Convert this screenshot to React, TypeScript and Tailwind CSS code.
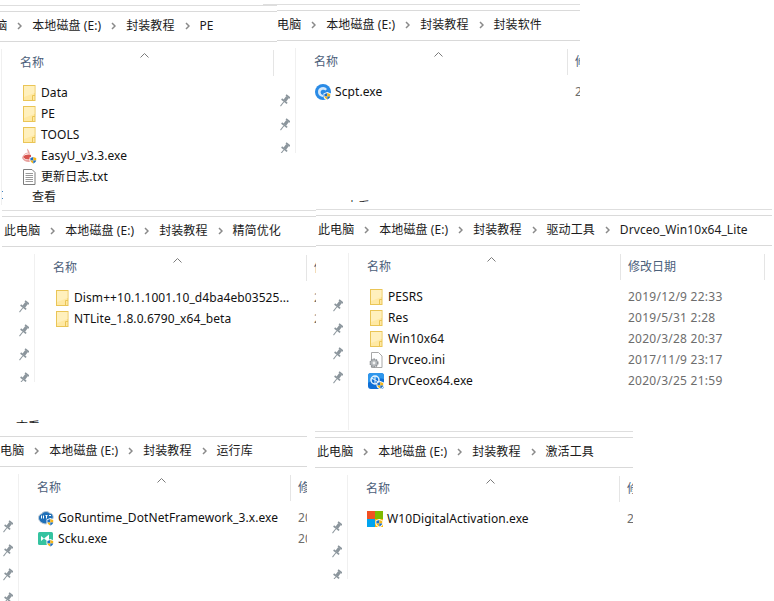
import { ReactNode } from "react";

const Shield = () => (
  <g>
    <path d="M8.5 9.5 L12.3 8 L16 9.5 V12.5 C16 14.4 14.4 15.6 12.3 16.2 C10.2 15.6 8.5 14.4 8.5 12.5 Z" fill="#fff" />
    <path d="M12.3 8.9 V12.5 H9.4 V10.1 Z" fill="#1d6fc4" />
    <path d="M12.3 8.9 L15.2 10.1 V12.5 H12.3 Z" fill="#f4b61a" />
    <path d="M9.4 12.5 H12.3 V15.4 C11 15 9.6 14 9.4 12.5 Z" fill="#f4b61a" />
    <path d="M15.2 12.5 H12.3 V15.4 C13.6 15 15 14 15.2 12.5 Z" fill="#1d6fc4" />
  </g>
);

const FolderIcon = () => (
  <svg width="16" height="16" viewBox="0 0 16 16" className="shrink-0">
    <rect x="2.5" y="0.5" width="11.5" height="15" fill="#ffe9a4" stroke="#eac556" />
    <path d="M3 1 H13.5 V8 L3 12 Z" fill="#fff0bd" />
    <path d="M11.5 15.5 V10.5 H14" fill="none" stroke="#eac556" />
  </svg>
);

const TextIcon = () => (
  <svg width="16" height="16" viewBox="0 0 16 16" className="shrink-0">
    <path d="M2.5 0.5 H11 L14 3.5 V15.5 H2.5 Z" fill="#fff" stroke="#7d7d7d" />
    <path d="M4.5 4.5 H12 M4.5 6.5 H12 M4.5 8.5 H12 M4.5 10.5 H12 M4.5 12.5 H12" stroke="#9a9a9a" />
  </svg>
);

const IniIcon = () => (
  <svg width="16" height="16" viewBox="0 0 16 16" className="shrink-0">
    <path d="M3.5 0.5 H10.5 L14 4 V15.5 H3.5 Z" fill="#fff" stroke="#a8a8a8" />
    <circle cx="6" cy="11" r="3.8" fill="#b4b8bb" stroke="#8d9195" strokeDasharray="1.6 0.8" strokeWidth="1.5" />
    <circle cx="6" cy="11" r="1.4" fill="#f2f2f2" />
  </svg>
);

const EasyIcon = () => (
  <svg width="16" height="16" viewBox="0 0 16 16" className="shrink-0">
    <path d="M6 0.5 C8 2 8.5 4 9 6 C6 4.5 3.5 6 2 9 C3 11.5 6 12.5 9 11.5 L9 14 C5.5 14.5 2.5 13 1 10 C2 6.5 4 5 7 4.5 C6.5 3 6 2 6 0.5 Z" fill="#e9a3a0" />
    <path d="M2 9 C4 6.5 7 6 10 7 L10 11 C7 12 4 11.5 2 9 Z" fill="#d8544f" />
    <Shield />
  </svg>
);

const ScptIcon = () => (
  <svg width="16" height="16" viewBox="0 0 16 16" className="shrink-0">
    <circle cx="8" cy="8" r="8" fill="#2a8be6" />
    <path d="M3 8 A5 5 0 0 1 12 5 L10.5 6.5 A3 3 0 0 0 5.5 8 A3 3 0 0 0 8 11 L8 13 A5 5 0 0 1 3 8 Z" fill="#d5e8fa" />
    <Shield />
  </svg>
);

const DrvIcon = () => (
  <svg width="16" height="16" viewBox="0 0 16 16" className="shrink-0">
    <rect width="16" height="16" rx="3" fill="#0f6fd6" />
    <path d="M0 3 A3 3 0 0 1 3 0 H13 A3 3 0 0 1 16 3 V6 C10 4 5 6 0 10 Z" fill="#2f97ec" />
    <circle cx="7" cy="7" r="4" fill="none" stroke="#e6f3fd" strokeWidth="1.5" />
    <path d="M7 3 V11 M3.5 5 L10.5 9" stroke="#e6f3fd" />
    <Shield />
  </svg>
);

const NetIcon = () => (
  <svg width="16" height="16" viewBox="0 0 16 16" className="shrink-0">
    <path d="M0.5 8 C0.5 5 2.5 4 3.5 4 C5 1 10 1 11.5 3 C14 3 15.7 5.5 15.2 8 C14 11 11 13 8 14 C4 14 0.5 11 0.5 8 Z" fill="#1e6fb8" stroke="#c4cfd8" />
    <path d="M3.5 5.5 V8.5 M5.5 5.5 V8.5 M7.5 5.5 H9.5 M8.5 5.5 V8.5 M11 5.5 H13" stroke="#fff" />
    <Shield />
  </svg>
);

const SckuIcon = () => (
  <svg width="16" height="16" viewBox="0 0 16 16" className="shrink-0">
    <rect y="1" width="15" height="13" rx="1.5" fill="#35c3a0" />
    <path d="M3 5 L6 7.5 L3 10 Z M6 7.5 L11 3.5 V11.5 Z" fill="#fff" />
    <Shield />
  </svg>
);

const WinIcon = () => (
  <svg width="16" height="16" viewBox="0 0 16 16" className="shrink-0">
    <rect width="8" height="8" fill="#f25022" />
    <rect x="8" width="8" height="8" fill="#7fba00" />
    <rect y="8" width="8" height="8" fill="#00a4ef" />
    <rect x="8" y="8" width="8" height="8" fill="#ffb900" />
    <Shield />
  </svg>
);

const PinIcon = () => (
  <svg width="11" height="14" viewBox="0 0 11 14" className="shrink-0">
    <g transform="rotate(38 5.5 7)" fill="#8b959c">
      <rect x="3" y="0.5" width="5" height="1.6" />
      <rect x="3.8" y="2" width="3.4" height="4.6" />
      <rect x="2" y="6.4" width="7" height="1.6" />
      <rect x="5" y="8" width="1" height="5.5" />
    </g>
  </svg>
);

const CrumbArrow = () => (
  <span className="flex w-[25px] shrink-0 justify-center">
    <svg width="5" height="8" viewBox="0 0 5 8">
      <path d="M1 1 L4 4 L1 7" fill="none" stroke="#8a8a8a" strokeWidth="1.5" />
    </svg>
  </span>
);

type Row = { icon: ReactNode; name: string; date?: string };

type WindowProps = {
  frame: string;
  sidebar: string;
  pins: number;
  crumb: string[];
  rows: Row[];
  noTopLine?: boolean;
  children?: ReactNode;
};

function ExplorerWindow({ frame, sidebar, pins, crumb, rows, noTopLine, children }: WindowProps) {
  return (
    <div className={`absolute flex flex-col overflow-hidden bg-white ${frame}`}>
      <div className={`h-[7px] shrink-0 border-y border-b-[#dadada] ${noTopLine ? "border-t-transparent" : "border-t-[#dedede]"}`} />
      <div className="flex h-[30px] shrink-0 items-center whitespace-nowrap border-b border-[#d9d9d9] pb-[2px] pl-[2px] tracking-[0.08px] text-[#1c1c1c]">
        {crumb.map((c, i) => (
          <span key={c} className="flex items-center">
            {i > 0 && <CrumbArrow />}
            {c}
          </span>
        ))}
      </div>

      <div className="flex flex-1 items-start pt-[7px]">
        <div className={`flex w-[33px] shrink-0 flex-col items-center gap-[10px] overflow-hidden border-r border-[#f0f0f0] pl-[11px] pt-[46px] ${sidebar}`}>
          {Array.from({ length: pins }).map((_, i) => (
            <PinIcon key={i} />
          ))}
        </div>

        <div className="relative flex flex-col">
          <svg width="9" height="5" viewBox="0 0 9 5" className="absolute left-[138px] top-[4px]">
            <path d="M0.5 4.5 L4.5 0.5 L8.5 4.5" fill="none" stroke="#7b7b7b" />
          </svg>
          <div className="flex h-[27px] items-center whitespace-nowrap pt-[1px] text-[#4c607a]">
            <div className="flex h-full w-[272px] items-center border-r border-[#e5e5e5] pl-[18px]">名称</div>
            <div className="flex h-full w-[144px] items-center border-r border-[#e5e5e5] pl-[7px]">修改日期</div>
          </div>
          <div className="flex flex-col pt-[6px]">
            {rows.map((r) => (
              <div key={r.name} className="flex h-[21px] items-center whitespace-nowrap">
                <div className="flex w-[272px] items-center gap-[4px] pl-[19px] tracking-[0.08px] text-[#111]">
                  {r.icon}
                  <span>{r.name}</span>
                </div>
                <div className="pl-[7px] tracking-[0.25px] text-[#6d6d6d]">{r.date}</div>
              </div>
            ))}
          </div>
        </div>
      </div>
      {children}
    </div>
  );
}

// 查看 left over from the ribbon of the window below, only a sliver shows
const Sliver = ({ className }: { className: string }) => (
  <div className={`absolute overflow-hidden whitespace-nowrap text-[#222] ${className}`}>查看</div>
);

export default function App() {
  return (
    <div className="relative h-[601px] w-[774px] overflow-hidden bg-white font-['Noto_Sans','Noto_Sans_CJK_SC',sans-serif] text-[12px] leading-[16px]">
      <ExplorerWindow
        frame="left-[263px] top-[4px] h-[205px] w-[317px]"
        sidebar="h-[105px]"
        pins={3}
        crumb={["此电脑", "本地磁盘 (E:)", "封装教程", "封装软件"]}
        rows={[{ icon: <ScptIcon />, name: "Scpt.exe", date: "2020/3/28 20:37" }]}
      >
        <Sliver className="left-[83px] top-[195px] h-[3px] w-[24px]" />
      </ExplorerWindow>

      <ExplorerWindow
        frame="-left-[31px] top-[5px] h-[204px] w-[308px]"
        sidebar="h-[156px]"
        pins={0}
        crumb={["此电脑", "本地磁盘 (E:)", "封装教程", "PE"]}
        rows={[
          { icon: <FolderIcon />, name: "Data" },
          { icon: <FolderIcon />, name: "PE" },
          { icon: <FolderIcon />, name: "TOOLS" },
          { icon: <EasyIcon />, name: "EasyU_v3.3.exe" },
          { icon: <TextIcon />, name: "更新日志.txt" },
        ]}
      >
        <Sliver className="left-[63px] top-[184px] h-[16px] w-[24px]" />
        <span className="absolute left-[33px] top-[186px] h-px w-px bg-[#3b82c4]" />
        <span className="absolute left-[33px] top-[193px] h-px w-px bg-[#3b82c4]" />
      </ExplorerWindow>

      <ExplorerWindow
        frame="left-[2px] top-[210px] h-[216px] w-[314px]"
        sidebar="h-[128px]"
        pins={4}
        crumb={["此电脑", "本地磁盘 (E:)", "封装教程", "精简优化"]}
        rows={[
          { icon: <FolderIcon />, name: "Dism++10.1.1001.10_d4ba4eb03525...", date: "2020/3/28 20:37" },
          { icon: <FolderIcon />, name: "NTLite_1.8.0.6790_x64_beta", date: "2020/3/28 20:37" },
        ]}
      >
        <Sliver className="left-[14px] top-[209px] h-[4px] w-[24px]" />
      </ExplorerWindow>

      <ExplorerWindow
        frame="left-[316px] top-[209px] h-[221px] w-[456px]"
        sidebar="h-[177px]"
        pins={4}
        crumb={["此电脑", "本地磁盘 (E:)", "封装教程", "驱动工具", "Drvceo_Win10x64_Lite"]}
        rows={[
          { icon: <FolderIcon />, name: "PESRS", date: "2019/12/9 22:33" },
          { icon: <FolderIcon />, name: "Res", date: "2019/5/31 2:28" },
          { icon: <FolderIcon />, name: "Win10x64", date: "2020/3/28 20:37" },
          { icon: <IniIcon />, name: "Drvceo.ini", date: "2017/11/9 23:17" },
          { icon: <DrvIcon />, name: "DrvCeox64.exe", date: "2020/3/25 21:59" },
        ]}
      />

      <ExplorerWindow
        frame="-left-[14px] top-[430px] h-[171px] w-[321px]"
        sidebar="h-[127px]"
        pins={4}
        noTopLine
        crumb={["此电脑", "本地磁盘 (E:)", "封装教程", "运行库"]}
        rows={[
          { icon: <NetIcon />, name: "GoRuntime_DotNetFramework_3.x.exe", date: "2020/3/28 20:37" },
          { icon: <SckuIcon />, name: "Scku.exe", date: "2020/3/28 20:37" },
        ]}
      />

      <ExplorerWindow
        frame="left-[315px] top-[431px] h-[170px] w-[318px]"
        sidebar="h-[104px]"
        pins={3}
        crumb={["此电脑", "本地磁盘 (E:)", "封装教程", "激活工具"]}
        rows={[{ icon: <WinIcon />, name: "W10DigitalActivation.exe", date: "2020/3/28 20:37" }]}
      />
    </div>
  );
}
